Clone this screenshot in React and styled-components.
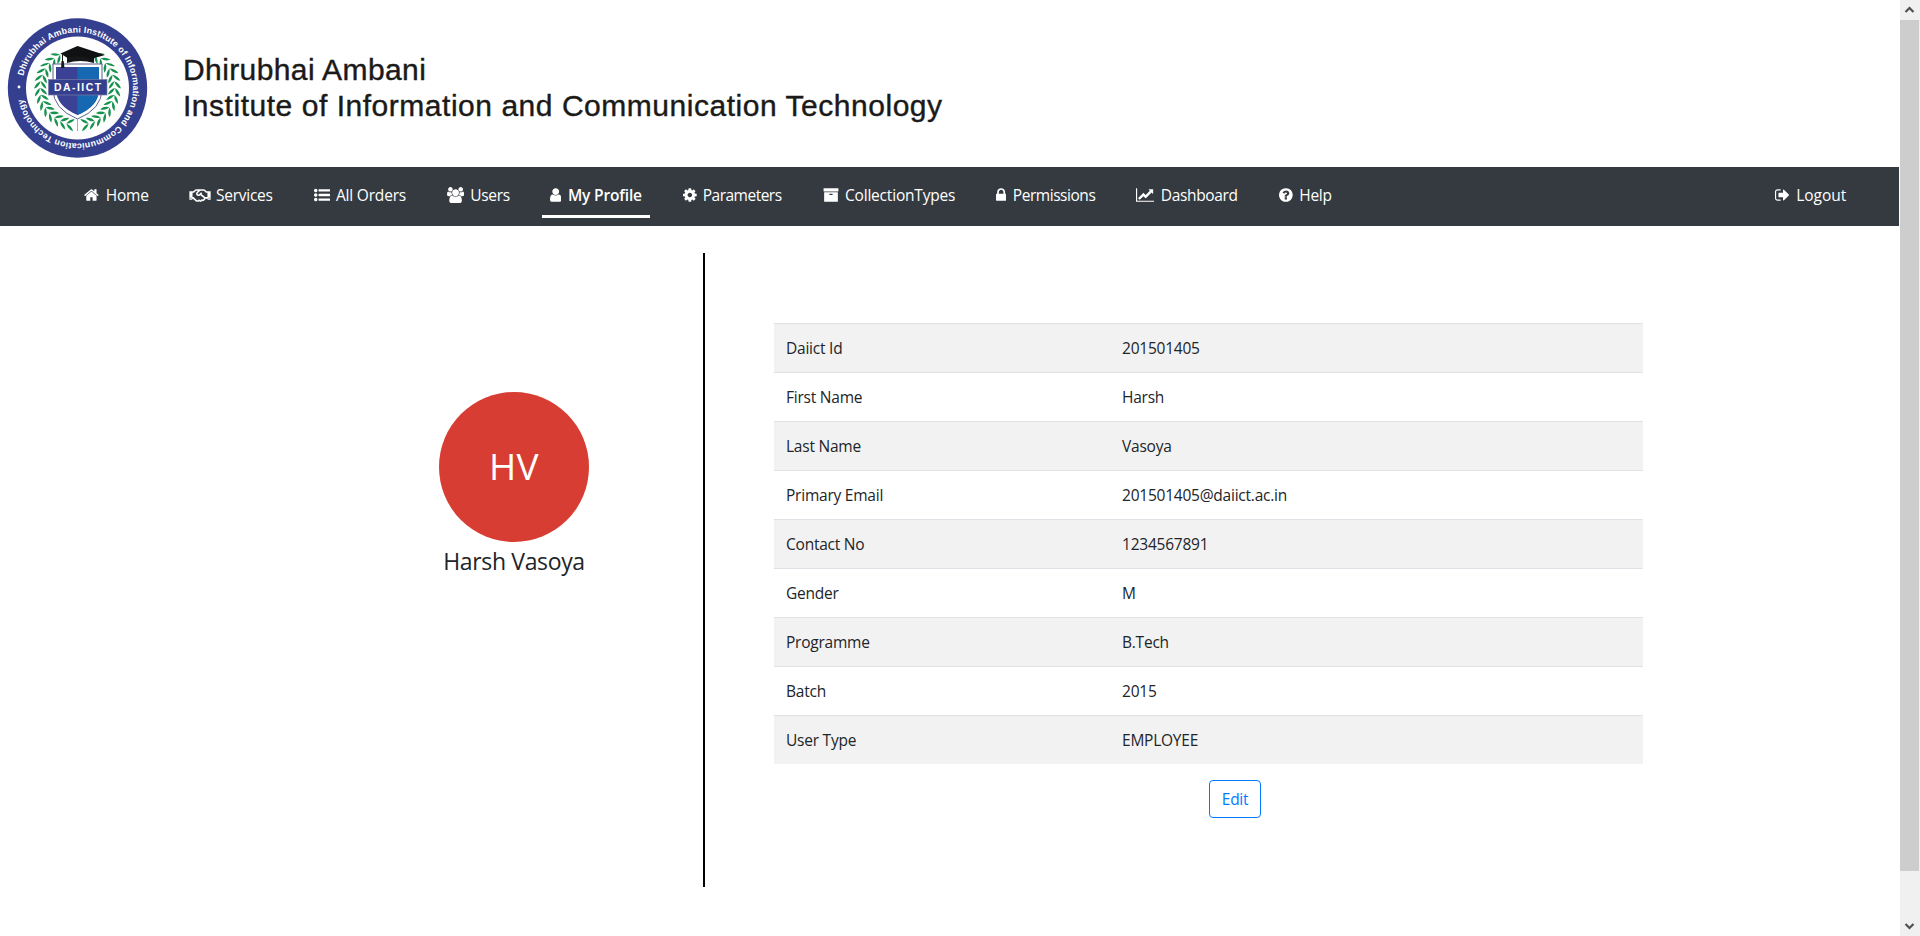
import React from "react";
import styled, { createGlobalStyle, css } from "styled-components";
import { FaRegHandshake } from "react-icons/fa";

const GlobalStyle = createGlobalStyle`
  *, *::before, *::after { box-sizing: border-box; }
  body {
    margin: 0;
    overflow: hidden;
    background: #fff;
    color: #212529;
    font-family: "Open Sans", "Noto Sans", sans-serif;
    font-size: 15.5px;
    line-height: 24px;
  }
`;

const Screen = styled.div`
  display: flex;
  height: 936px;
  width: 1920px;
`;

const Page = styled.div`
  flex: 1;
  display: flex;
  flex-direction: column;
`;

const Header = styled.header`
  height: 167px;
  display: flex;
  align-items: flex-start;
  padding: 17px 0 0 7px;
`;

const Emblem = styled.svg`
  width: 142px;
  height: 142px;
  flex: none;
  font-family: "Liberation Sans", Arial, sans-serif;
`;

const Institute = styled.div`
  padding: 35px 0 0 34px;
  font-family: "Liberation Sans", Arial, sans-serif;
  font-size: 30px;
  line-height: 36px;
  color: #1b1a19;
  -webkit-text-stroke: 0.4px #1b1a19;
  white-space: nowrap;
`;

const InstituteLine = styled.div`
  letter-spacing: ${(p) => p.$tracking}px;
`;

const NavBar = styled.nav`
  display: flex;
  align-items: flex-start;
  gap: 25px;
  width: 1899px;
  height: 59px;
  padding: 8px 45px 0 76px;
  background: #343a40;
  color: #fff;
`;

const NavItem = styled.a`
  display: flex;
  align-items: center;
  gap: ${(p) => p.$gap ?? 6}px;
  width: ${(p) => p.$width}px;
  height: 43px;
  padding: 0 0 3px 8px;
  white-space: nowrap;
  letter-spacing: ${(p) => p.$tracking ?? -0.25}px;
  ${(p) =>
    p.$active &&
    css`
      font-weight: 600;
      padding-bottom: 0;
      border-bottom: 3px solid #fff;
    `}
  ${(p) =>
    p.$last &&
    css`
      margin-left: auto;
    `}
`;

const NavIcon = styled.svg`
  flex: none;
  height: 16px;
  width: ${(p) => p.$width}px;
  fill: currentColor;
`;

const Handshake = styled(FaRegHandshake)`
  flex: none;
  width: 22px;
  height: 17px;
`;

const Content = styled.main`
  display: flex;
  padding-top: 27px;
`;

const Person = styled.section`
  display: flex;
  flex-direction: column;
  align-items: center;
  width: 705px;
  height: 634px;
  padding: 139px 0 0 325px;
  border-right: 2px solid #000;
`;

const Avatar = styled.div`
  display: flex;
  align-items: center;
  justify-content: center;
  width: 150px;
  height: 150px;
  padding-bottom: 2px;
  border-radius: 50%;
  background: #d73d32;
  color: #fff;
  font-size: 37px;
  letter-spacing: 0.4px;
`;

const PersonName = styled.h1`
  margin: 5px 0 0;
  font-size: 23px;
  font-weight: 400;
  line-height: 28px;
  letter-spacing: -0.35px;
`;

const Details = styled.section`
  display: flex;
  flex-direction: column;
  width: 938px;
  padding: 70px 0 0 69px;
`;

const Table = styled.dl`
  margin: 0;
`;

const Row = styled.div`
  display: grid;
  grid-template-columns: 336px 1fr;
  height: 49px;
  border-top: 1px solid #dee2e6;
  background: ${(p) => (p.$striped ? "#f2f2f2" : "#fff")};
`;

const Cell = styled.dd`
  margin: 0;
  padding: 12px;
  letter-spacing: -0.23px;
`;

const EditButton = styled.button`
  width: 52px;
  height: 38px;
  margin: 16px 0 0 435px;
  padding: 0;
  border: 1px solid #007bff;
  border-radius: 4px;
  background: #fff;
  color: #007bff;
  font: inherit;
  letter-spacing: -0.3px;
`;

const ScrollBar = styled.aside`
  display: flex;
  flex-direction: column;
  width: 20px;
  background: #f0f0f0;
`;

const Arrow = styled.svg`
  width: 19px;
  height: 20px;
  fill: none;
  stroke: #505050;
  stroke-width: 2.2;
`;

const Thumb = styled.div`
  width: 19px;
  height: 851px;
  margin-bottom: 45px;
  background: #cdcdcd;
`;

const PATHS = {
  home: "M1472 992v480q0 26-19 45t-45 19h-384v-384h-256v384h-384q-26 0-45-19t-19-45v-480q0-1 .5-3t.5-3l575-474 575 474q1 2 1 6zm223-69l-62 74q-8 9-21 11h-3q-13 0-21-7l-692-577-692 577q-12 8-24 7-13-2-21-11l-62-74q-8-10-7-23.5t11-21.5l719-599q32-26 76-26t76 26l244 204v-195q0-14 9-23t23-9h192q14 0 23 9t9 23v408l219 182q10 8 11 21.5t-7 23.5z",
  list: "M384 1408q0 80-56 136t-136 56-136-56-56-136 56-136 136-56 136 56 56 136zm0-512q0 80-56 136t-136 56-136-56-56-136 56-136 136-56 136 56 56 136zm1408 416v192q0 13-9.5 22.5t-22.5 9.5h-1216q-13 0-22.5-9.5t-9.5-22.5v-192q0-13 9.5-22.5t22.5-9.5h1216q13 0 22.5 9.5t9.5 22.5zm-1408-928q0 80-56 136t-136 56-136-56-56-136 56-136 136-56 136 56 56 136zm1408 416v192q0 13-9.5 22.5t-22.5 9.5h-1216q-13 0-22.5-9.5t-9.5-22.5v-192q0-13 9.5-22.5t22.5-9.5h1216q13 0 22.5 9.5t9.5 22.5zm0-512v192q0 13-9.5 22.5t-22.5 9.5h-1216q-13 0-22.5-9.5t-9.5-22.5v-192q0-13 9.5-22.5t22.5-9.5h1216q13 0 22.5 9.5t9.5 22.5z",
  users: "M593 896q-162 5-265 128h-134q-82 0-138-40.5t-56-118.5q0-353 124-353 6 0 43.5 21t97.5 42.5 119 21.5q67 0 133-23-5 37-5 66 0 139 81 256zm1071 637q0 120-73 189.5t-194 69.5h-874q-121 0-194-69.5t-73-189.5q0-53 3.5-103.5t14-109 26.5-108.5 43-97.5 62-81 85.5-53.5 111.5-20q10 0 43 21.5t73 48 107 48 135 21.5 135-21.5 107-48 73-48 43-21.5q61 0 111.5 20t85.5 53.5 62 81 43 97.5 26.5 108.5 14 109 3.5 103.5zm-1024-1277q0 106-75 181t-181 75-181-75-75-181 75-181 181-75 181 75 75 181zm704 384q0 159-112.5 271.5t-271.5 112.5-271.5-112.5-112.5-271.5 112.5-271.5 271.5-112.5 271.5 112.5 112.5 271.5zm576 225q0 78-56 118.5t-138 40.5h-134q-103-123-265-128 81-117 81-256 0-29-5-66 66 23 133 23 59 0 119-21.5t97.5-42.5 43.5-21q124 0 124 353zm-128-609q0 106-75 181t-181 75-181-75-75-181 75-181 181-75 181 75 75 181z",
  user: "M1536 1399q0 109-62.5 187t-150.5 78h-854q-88 0-150.5-78t-62.5-187q0-85 8.5-160.5t31.5-152 58.5-131 94-89 134.5-34.5q131 128 313 128t313-128q76 0 134.5 34.5t94 89 58.5 131 31.5 152 8.5 160.5zm-256-887q0 159-112.5 271.5t-271.5 112.5-271.5-112.5-112.5-271.5 112.5-271.5 271.5-112.5 271.5 112.5 112.5 271.5z",
  cog: "M1152 896q0-106-75-181t-181-75-181 75-75 181 75 181 181 75 181-75 75-181zm512-109v222q0 12-8 23t-20 13l-185 28q-19 54-39 91 35 50 107 138 10 12 10 25t-9 23q-27 37-99 108t-94 71q-12 0-26-9l-138-108q-44 23-91 38-16 136-29 186-7 28-36 28h-222q-14 0-24.5-8.5t-11.5-21.5l-28-184q-49-16-90-37l-141 107q-10 9-25 9-14 0-25-11-126-114-165-168-7-10-7-23 0-12 8-23 15-21 51-66.5t54-70.5q-27-50-41-99l-183-27q-13-2-21-12.5t-8-23.5v-222q0-12 8-23t19-13l186-28q14-46 39-92-40-57-107-138-10-12-10-24 0-10 9-23 26-36 98.5-107.5t94.5-71.5q13 0 26 10l138 107q44-23 91-38 16-136 29-186 7-28 36-28h222q14 0 24.5 8.5t11.5 21.5l28 184q49 16 90 37l142-107q9-9 24-9 13 0 25 10 129 119 165 170 7 8 7 22 0 12-8 23-15 21-51 66.5t-54 70.5q26 50 41 98l183 28q13 2 21 12.5t8 23.5z",
  archive: "M1088 832q0-26-19-45t-45-19h-256q-26 0-45 19t-19 45 19 45 45 19h256q26 0 45-19t19-45zm576-192v960q0 26-19 45t-45 19h-1408q-26 0-45-19t-19-45v-960q0-26 19-45t45-19h1408q26 0 45 19t19 45zm64-448v256q0 26-19 45t-45 19h-1536q-26 0-45-19t-19-45v-256q0-26 19-45t45-19h1536q26 0 45 19t19 45z",
  lock: "M640 768h512v-192q0-106-75-181t-181-75-181 75-75 181v192zm832 96v576q0 40-28 68t-68 28h-960q-40 0-68-28t-28-68v-576q0-40 28-68t68-28h32v-192q0-184 132-316t316-132 316 132 132 316v192h32q40 0 68 28t28 68z",
  chart: "M2048 1536v128h-2048v-1536h128v1408h1920zm-128-1248v435q0 21-19.5 29.5t-35.5-7.5l-121-121-633 633q-10 10-23 10t-23-10l-233-233-416 416-192-192 585-585q10-10 23-10t23 10l233 233 464-464-121-121q-16-16-7.5-35.5t29.5-19.5h435q14 0 23 9t9 23z",
  help: "M1024 1376v-192q0-14-9-23t-23-9h-192q-14 0-23 9t-9 23v192q0 14 9 23t23 9h192q14 0 23-9t9-23zm256-672q0-88-55.5-163t-138.5-116-170-41q-243 0-371 213-15 24 8 42l132 100q7 6 19 6 16 0 25-12 53-68 86-92 34-24 86-24 48 0 85.5 26t37.5 59q0 38-20 61t-68 45q-63 28-115.5 86.5t-52.5 125.5v36q0 14 9 23t23 9h192q14 0 23-9t9-23q0-19 21.5-49.5t54.5-49.5q32-18 49-28.5t46-35 44.5-48 28-60.5 12.5-81zm384 192q0 209-103 385.5t-279.5 279.5-385.5 103-385.5-103-279.5-279.5-103-385.5 103-385.5 279.5-279.5 385.5-103 385.5 103 279.5 279.5 103 385.5z",
  logout: "M704 1440q0 4 1 20t.5 26.5-3 23.5-10 19.5-20.5 6.5h-320q-119 0-203.5-84.5t-84.5-203.5v-704q0-119 84.5-203.5t203.5-84.5h320q13 0 22.5 9.5t9.5 22.5q0 4 1 20t.5 26.5-3 23.5-10 19.5-20.5 6.5h-320q-66 0-113 47t-47 113v704q0 66 47 113t113 47h312l11.5 1 11.5 3 8 5.5 7 9 2 13.5zm928-544q0 26-19 45l-544 544q-19 19-45 19t-45-19-19-45v-288h-448q-26 0-45-19t-19-45v-384q0-26 19-45t45-19h448v-288q0-26 19-45t45-19 45 19l544 544q19 19 19 45z",
};

/* [left, width] of each glyph on the 1792-unit tall icon grid */
const BOXES = {
  home: [64, 1664],
  list: [0, 1792],
  users: [0, 1920],
  user: [256, 1280],
  cog: [128, 1536],
  archive: [0, 1792],
  lock: [320, 1152],
  chart: [0, 2048],
  help: [128, 1536],
  logout: [64, 1600],
};

function Icon({ name }) {
  if (name === "services") return <Handshake />;
  const [left, width] = BOXES[name];
  return (
    <NavIcon viewBox={`${left} 0 ${width} 1792`} $width={(width / 1792) * 16}>
      <path d={PATHS[name]} />
    </NavIcon>
  );
}

const LINKS = [
  { icon: "home", label: "Home", width: 80, gap: 7 },
  { icon: "services", label: "Services", width: 100, gap: 5 },
  { icon: "list", label: "All Orders", width: 108, tracking: -0.2 },
  { icon: "users", label: "Users", width: 78 },
  { icon: "user", label: "My Profile", width: 108, gap: 6.5, active: true, tracking: -0.15 },
  { icon: "cog", label: "Parameters", width: 115, tracking: -0.5 },
  { icon: "archive", label: "CollectionTypes", width: 148, tracking: -0.2 },
  { icon: "lock", label: "Permissions", width: 115, gap: 6.5, tracking: -0.45 },
  { icon: "chart", label: "Dashboard", width: 118, gap: 6.5, tracking: -0.35 },
  { icon: "help", label: "Help", width: 70, gap: 6.5 },
];

const FIELDS = [
  ["Daiict Id", "201501405"],
  ["First Name", "Harsh"],
  ["Last Name", "Vasoya"],
  ["Primary Email", "201501405@daiict.ac.in"],
  ["Contact No", "1234567891"],
  ["Gender", "M"],
  ["Programme", "B.Tech"],
  ["Batch", "2015"],
  ["User Type", "EMPLOYEE"],
];

const LEAF_ANGLES = Array.from({ length: 14 }, (_, i) => 98 + i * 10.4);

function Branch({ flip }) {
  return (
    <g transform={`translate(70.5 71) scale(${flip ? -1 : 1} 1)`} fill="#15924c">
      {LEAF_ANGLES.map((deg) => (
        <g key={deg} transform={`rotate(${deg}) translate(37 0)`}>
          <path d="M0 6 Q-5 4 -6 -1.500 Q-1.500 0 0 6Z" />
          <path d="M0 6 Q5 4 6.500 -1.500 Q1.500 0 0 6Z" />
        </g>
      ))}
    </g>
  );
}

function Logo() {
  return (
    <Emblem viewBox="0 0 142 142">
      <defs>
        <path id="ring" d="M15 71a55.5 55.5 0 1 1 111 0a55.5 55.5 0 1 1 -111 0" />
        <clipPath id="shieldRight">
          <rect x="70.5" y="45" width="40" height="60" />
        </clipPath>
      </defs>
      <circle cx="70.5" cy="71" r="69.7" fill="#353f8f" />
      <circle cx="70.5" cy="71" r="51.5" fill="#fefefe" />
      <text fill="#fff" fontSize="8.8" fontWeight="700">
        <textPath href="#ring" startOffset="12" textLength="325">
          Dhirubhai Ambani Institute of Information and Communication Technology
        </textPath>
      </text>
      <circle cx="12" cy="70" r="1.4" fill="#fff" />
      <Branch />
      <Branch flip />
      <path d="M46 47H95V72Q95 92 70.5 102Q46 92 46 72Z" fill="#fff" stroke="#5d628c" strokeWidth="1" />
      <path d="M49 50H92V72Q92 89 70.5 98Q49 89 49 72Z" fill="#3b4296" />
      <path d="M49 50H92V72Q92 89 70.5 98Q49 89 49 72Z" fill="#1768b3" clipPath="url(#shieldRight)" />
      <path d="M70.5 102V114" stroke="#8a9a90" strokeWidth="0.8" />
      <rect x="41.5" y="62.5" width="58.5" height="15.5" fill="#353f8f" stroke="#777ca8" strokeWidth="0.7" />
      <text x="47" y="74" fill="#fff" fontSize="10.4" fontWeight="700" textLength="47">
        DA-IICT
      </text>
      <path d="M60 36H87V46Q73 42 60 46Z" fill="#161719" />
      <path d="M53.5 36.5L70.5 29L98 38L84 42Q73 37 60.5 41Z" fill="#101113" />
      <path d="M55.5 37V46" stroke="#161719" strokeWidth="1" />
      <path d="M54.5 44h2.2l.8 7h-3.4z" fill="#161719" />
    </Emblem>
  );
}

export default function App() {
  return (
    <>
      <GlobalStyle />
      <Screen>
        <Page>
          <Header>
            <Logo />
            <Institute>
              <InstituteLine $tracking={0.4}>Dhirubhai Ambani</InstituteLine>
              <InstituteLine $tracking={0.53}>
                Institute of Information and Communication Technology
              </InstituteLine>
            </Institute>
          </Header>
          <NavBar>
            {LINKS.map((l) => (
              <NavItem key={l.label} $width={l.width} $gap={l.gap} $active={l.active} $tracking={l.tracking}>
                <Icon name={l.icon} />
                <span>{l.label}</span>
              </NavItem>
            ))}
            <NavItem $width={87} $gap={7} $tracking={-0.05} $last>
              <Icon name="logout" />
              <span>Logout</span>
            </NavItem>
          </NavBar>
          <Content>
            <Person>
              <Avatar>HV</Avatar>
              <PersonName>Harsh Vasoya</PersonName>
            </Person>
            <Details>
              <Table>
                {FIELDS.map(([label, value], i) => (
                  <Row key={label} $striped={i % 2 === 0}>
                    <Cell as="dt">{label}</Cell>
                    <Cell>{value}</Cell>
                  </Row>
                ))}
              </Table>
              <EditButton>Edit</EditButton>
            </Details>
          </Content>
        </Page>
        <ScrollBar>
          <Arrow viewBox="0 0 19 20">
            <path d="M5.5 12L9.5 8L13.5 12" />
          </Arrow>
          <Thumb />
          <Arrow viewBox="0 0 19 20">
            <path d="M5.5 8L9.5 12L13.5 8" />
          </Arrow>
        </ScrollBar>
      </Screen>
    </>
  );
}
